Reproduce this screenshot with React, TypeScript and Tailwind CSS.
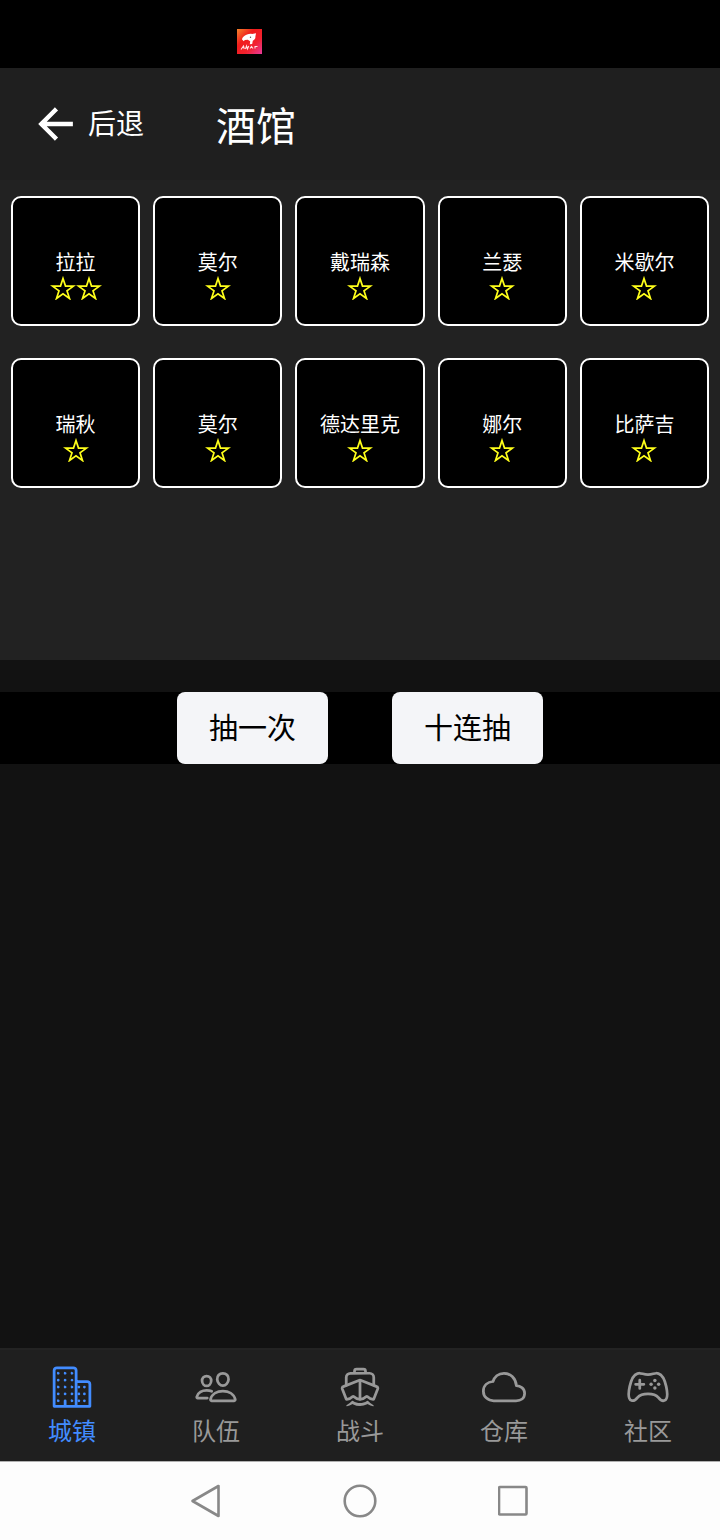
import React from "react";
import {
  IoArrowBackSharp,
  IoBoatOutline,
  IoBusinessOutline,
  IoCloudOutline,
  IoGameControllerOutline,
  IoPeopleOutline,
} from "react-icons/io5";

const heroes = [
  { name: "拉拉", stars: 2 },
  { name: "莫尔", stars: 1 },
  { name: "戴瑞森", stars: 1 },
  { name: "兰瑟", stars: 1 },
  { name: "米歇尔", stars: 1 },
  { name: "瑞秋", stars: 1 },
  { name: "莫尔", stars: 1 },
  { name: "德达里克", stars: 1 },
  { name: "娜尔", stars: 1 },
  { name: "比萨吉", stars: 1 },
];

const tabs = [
  { label: "城镇", icon: IoBusinessOutline },
  { label: "队伍", icon: IoPeopleOutline },
  { label: "战斗", icon: IoBoatOutline },
  { label: "仓库", icon: IoCloudOutline },
  { label: "社区", icon: IoGameControllerOutline },
];

function StatusBar() {
  return (
    <div className="h-[68px] bg-black pt-[29px] pl-[237px]">
      <svg className="w-[25px] h-[25px]" viewBox="0 0 25 25">
        <defs>
          <linearGradient id="promo" x1="0" y1="0" x2="1" y2="1">
            <stop offset="0" stopColor="#f4842c" />
            <stop offset="0.35" stopColor="#f01c1c" />
            <stop offset="0.65" stopColor="#f2222e" />
            <stop offset="1" stopColor="#e83a9c" />
          </linearGradient>
        </defs>
        <rect width="25" height="25" fill="url(#promo)" />
        <path
          d="M5 10.500c0-2 2-4 5-5 2-1 4-1 5-.6l4-.6-.6 3.200c.3 2-1 3.600-2.600 4.200l-.6 3.200-2.400.4.4-3-2.400-1.600-3 .2-1 1.400z"
          fill="#fff"
        />
        <circle cx="13.500" cy="8.300" r="0.700" fill="#555" />
        <path
          d="M4 20.500l2.500-3.500.8 3M8.500 20l1-3 1 3 1.200-3M13 19.500l1.500-2 1.500 2M17.500 17.500h3M18 17.500v2"
          fill="none"
          stroke="#ffe3e3"
          strokeWidth="1.100"
        />
      </svg>
    </div>
  );
}

function Star() {
  return (
    <svg className="w-[26px] h-6" viewBox="0 0 26 24" fill="none" stroke="#ffff1a" strokeWidth="1.700">
      <path d="M13 2.500l2.500 7.600h8l-6.500 4.700 2.500 7.700-6.500-4.800-6.500 4.800L9 14.800l-6.500-4.700h8z" />
    </svg>
  );
}

function HeroCard({ name, stars }: { name: string; stars: number }) {
  return (
    <div className="h-[130px] flex flex-col items-center pt-[50px] bg-black border-2 border-white rounded-[10px]">
      <span className="text-[20px] leading-[28px]">{name}</span>
      <div className="flex" role="img" aria-label={`${stars}星`}>
        {Array.from({ length: stars }, (_, i) => (
          <Star key={i} />
        ))}
      </div>
    </div>
  );
}

export default function App() {
  const [active, setActive] = React.useState(0);

  return (
    <div className="min-h-screen flex flex-col bg-[#121212] text-white font-['Noto_Sans_CJK_SC',sans-serif]">
      <StatusBar />

      <header className="h-28 flex items-center bg-[#1f1f1f] pl-8">
        <button className="flex items-center gap-2 text-[28px] leading-[40px]">
          <IoArrowBackSharp className="w-12 h-12" />
          <span className="pb-1">后退</span>
        </button>
        <h1 className="ml-[72px] text-[40px] leading-[56px]">酒馆</h1>
      </header>

      <main className="flex-1">
        <section className="h-[480px] bg-[#222222] px-[11px] pt-4">
          <div className="grid grid-cols-5 gap-x-[13px] gap-y-8">
            {heroes.map((hero, index) => (
              <HeroCard key={index} name={hero.name} stars={hero.stars} />
            ))}
          </div>
        </section>

        <div className="mt-8 flex justify-center gap-16 bg-black">
          <button className="h-[72px] px-8 pb-1 rounded-lg bg-[#f4f5f8] text-black text-[29px] leading-[40px]">
            抽一次
          </button>
          <button className="h-[72px] px-8 pb-1 rounded-lg bg-[#f4f5f8] text-black text-[29px] leading-[40px]">
            十连抽
          </button>
        </div>
      </main>

      <nav className="h-[113px] grid grid-cols-5 bg-[#1f1f1f] border-t-2 border-[#232323]">
        {tabs.map(({ label, icon: Icon }, index) => (
          <button
            key={label}
            onClick={() => setActive(index)}
            className={`flex flex-col items-center pt-[15px] gap-1 text-[24px] leading-[34px] ${
              active === index ? "text-[#428cff]" : "text-[#999999]"
            }`}
          >
            <Icon className="w-11 h-11" />
            {label}
          </button>
        ))}
      </nav>

      {/* System navigation */}
      <div className="h-[79px] flex items-center justify-center gap-[120px] bg-[#fdfdfd] text-[#888888] border-t border-[#b0b0b0]">
        <button aria-label="返回">
          <svg className="w-8 h-9" viewBox="0 0 32 36" fill="none" stroke="currentColor" strokeWidth="2.600" strokeLinejoin="round">
            <path d="M28.500 3v30L2.500 18z" />
          </svg>
        </button>
        <button aria-label="主页">
          <svg className="w-9 h-9" viewBox="0 0 36 36" fill="none" stroke="currentColor" strokeWidth="2.600">
            <circle cx="18" cy="18" r="15.300" />
          </svg>
        </button>
        <button aria-label="最近任务">
          <svg className="w-8 h-9" viewBox="0 0 32 36" fill="none" stroke="currentColor" strokeWidth="2.600" strokeLinejoin="round">
            <rect x="0.500" y="4" width="27.500" height="27.500" rx="1" transform="translate(0.500 0)" />
          </svg>
        </button>
      </div>
    </div>
  );
}
